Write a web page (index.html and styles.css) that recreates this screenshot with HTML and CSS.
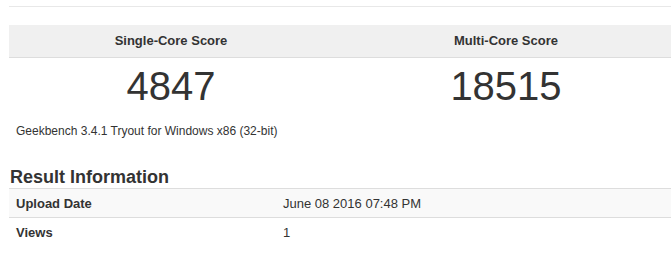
FILE: index.html
```html
<!DOCTYPE html>
<html>
<head>
  <title>Geekbench Result</title>
  <link rel="stylesheet" href="styles.css">
</head>
<body>
  <div class="page">
    <div class="top-rule"></div>

    <div class="scores">
      <div class="score-head">Single-Core Score</div>
      <div class="score-head">Multi-Core Score</div>
      <div class="score-value">4847</div>
      <div class="score-value">18515</div>
    </div>

    <p class="version">Geekbench 3.4.1 Tryout for Windows x86 (32-bit)</p>

    <h3 class="section-title">Result Information</h3>
    <table class="info-table">
      <tr class="striped">
        <th>Upload Date</th>
        <td>June 08 2016 07:48 PM</td>
      </tr>
      <tr>
        <th>Views</th>
        <td>1</td>
      </tr>
    </table>
  </div>
</body>
</html>
```

FILE: styles.css
```css
body {
  font-family: "Liberation Sans", Arial, sans-serif;
  color: #333;
  background-color: #fff;
  margin: 0;
  overflow: hidden;
}

.page {
  width: 670px;
  padding: 6px 0 0 9px;
}

.top-rule {
  height: 1px;
  background-color: #e8e8e8;
  margin-bottom: 18px;
}

.scores {
  display: grid;
  grid-template-columns: 324px 346px;
}

.score-head {
  background-color: #f0f0f0;
  border-bottom: 1px solid #ddd;
  height: 32px;
  line-height: 32px;
  font-size: 13px;
  font-weight: bold;
  text-align: center;
}

.score-value {
  font-size: 40px;
  line-height: 46px;
  padding-top: 5px;
  text-align: center;
}

.version {
  font-size: 12px;
  line-height: 16px;
  margin: 14px 0 0 7px;
}

.section-title {
  font-size: 18px;
  line-height: 22px;
  font-weight: bold;
  margin: 27px 0 0 1px;
}

.info-table {
  width: 670px;
  border-collapse: collapse;
  font-size: 13px;
}

.info-table tr {
  border-top: 1px solid #ddd;
}

.info-table th,
.info-table td {
  height: 28px;
  padding: 0 7px;
  text-align: left;
  vertical-align: middle;
}

.info-table th {
  width: 253px;
  font-weight: bold;
}

.info-table .striped {
  background-color: #f9f9f9;
}
```
